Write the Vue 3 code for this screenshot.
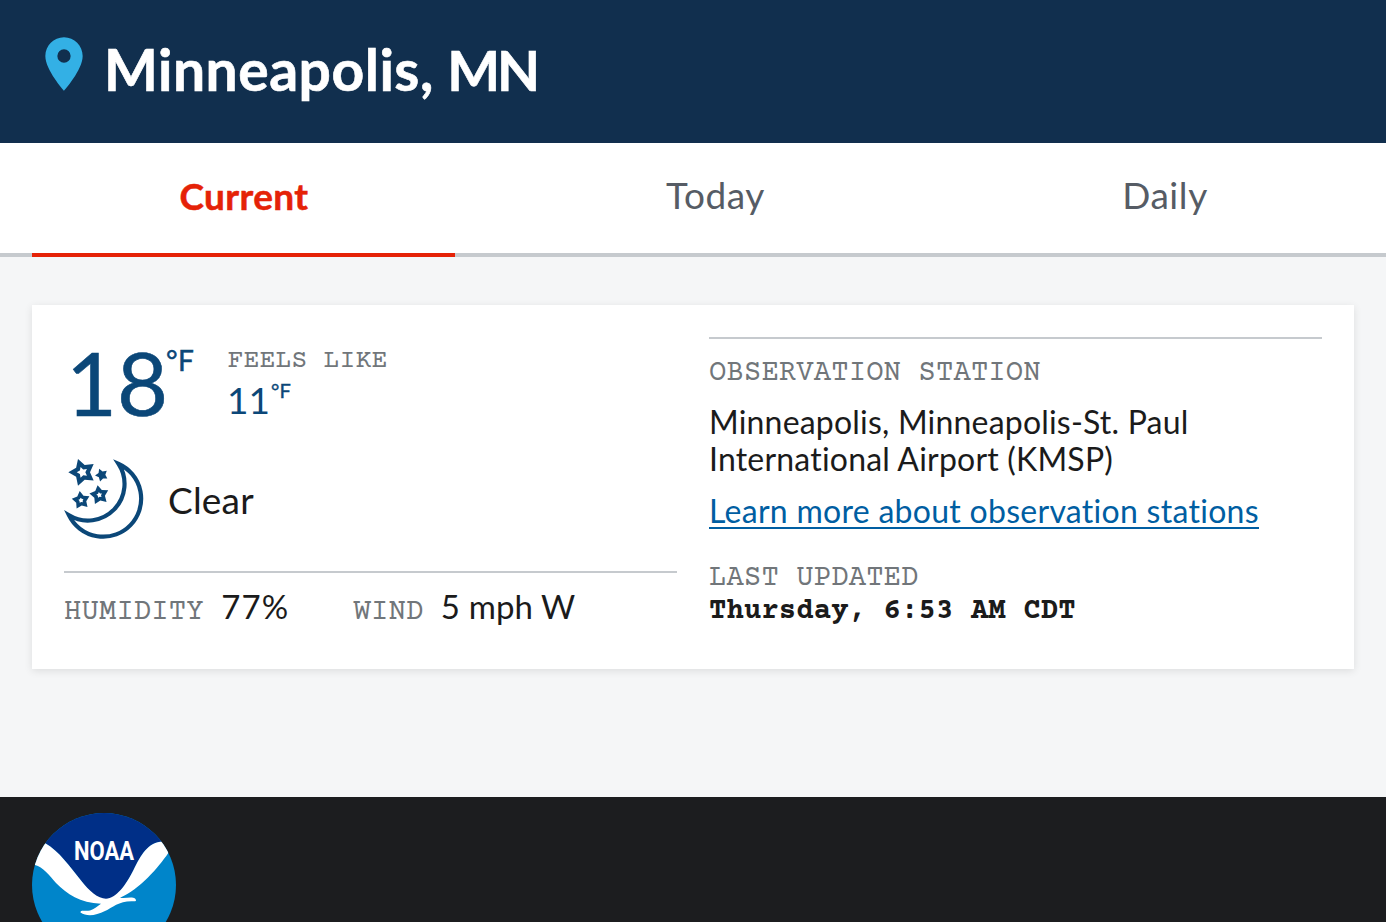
<script setup>
const tabs = [
  { label: 'Current', active: true },
  { label: 'Today', active: false },
  { label: 'Daily', active: false },
]

function starPath(cx, cy, outer, inner, rotation) {
  const points = []
  for (let i = 0; i < 10; i++) {
    const radius = i % 2 === 0 ? outer : inner
    const angle = ((rotation + i * 36) * Math.PI) / 180
    points.push(`${(cx + radius * Math.cos(angle)).toFixed(1)} ${(cy + radius * Math.sin(angle)).toFixed(1)}`)
  }
  return `M${points.join('L')}Z`
}

const stars = [
  starPath(97, 97, 42, 23, -108) + starPath(97, 97, 17, 9, -108),
  starPath(155, 105, 20, 11, -112),
  starPath(93, 181, 28, 16, -98) + starPath(93, 181, 8, 5, -98),
  starPath(148, 165, 30, 17, -100) + starPath(148, 165, 9, 5, -100),
]
</script>

<template>
  <div class="page">
    <header class="header">
      <svg class="pin" viewBox="0 0 24 24" aria-hidden="true">
        <path d="M12 2C8.13 2 5 5.13 5 9c0 5.25 7 13 7 13s7-7.75 7-13c0-3.87-3.13-7-7-7zm0 9.5a2.5 2.5 0 0 1 0-5 2.5 2.5 0 0 1 0 5z" />
      </svg>
      <h1 class="title">Minneapolis, <span class="state">MN</span></h1>
    </header>

    <nav class="tabs">
      <button v-for="tab in tabs" :key="tab.label" class="tab" :class="{ active: tab.active }">
        <span>{{ tab.label }}</span>
      </button>
    </nav>

    <main class="main">
      <section class="card">
        <div class="conditions">
          <div class="temps">
            <div class="temp">18<span class="unit">°F</span></div>
            <div class="feels">
              <div class="label feels-label">FEELS LIKE</div>
              <div class="feels-value">11<span class="unit-small">°F</span></div>
            </div>
          </div>
          <div class="sky">
            <svg class="moon" viewBox="42 48 240 252" aria-hidden="true">
              <path class="crescent" d="M206 72A114 114 0 1 1 57 226A110 110 0 0 0 206 72Z" />
              <path v-for="(d, i) in stars" :key="i" class="star" :d="d" />
            </svg>
            <span class="sky-text">Clear</span>
          </div>
          <div class="metrics">
            <div class="metric"><span class="label">HUMIDITY</span><span class="value humidity">77%</span></div>
            <div class="metric"><span class="label">WIND</span><span class="value wind">5 mph W</span></div>
          </div>
        </div>

        <div class="station">
          <div class="label station-label">OBSERVATION STATION</div>
          <p class="station-name">Minneapolis, Minneapolis-St. Paul<br />International Airport (KMSP)</p>
          <a class="link" href="#">Learn more about observation stations</a>
          <div class="label updated-label">LAST UPDATED</div>
          <div class="updated">Thursday, 6:53 AM CDT</div>
        </div>
      </section>
    </main>

    <footer class="footer">
      <svg class="logo" viewBox="0 0 144 144" role="img">
        <clipPath id="disc"><circle cx="72" cy="72" r="72" /></clipPath>
        <g clip-path="url(#disc)">
          <rect width="144" height="144" fill="#0085ca" />
          <path fill="#002f87" d="M0 0H144V24L131 28.5C116 29 109 42 101.5 57C94 72 84 86.5 74 86.5C66 86.5 57 78 49 67.5C38 54 27 38 13.3 30.3L0 17Z" />
          <path fill="#fff" d="M0 17C7 24 10 28 13.3 30.3C27 38 38 54 49 67.5C57 78 66 85.7 74 85.7C84 85.7 94 72 101.5 57C109 42 116 29 131 28.5L144 24V31C138 38 137 38 136.3 40C126 55 108 76 88 84.7C94 85.5 100 83.5 103 85.5Q105 88 103 88.3C88 87 81 94 73 98C64 102.5 55 104 48.5 99.5C48 97 53 98.3 58 97.6C62 96 66 93 69 90.7C48 90 35 81 24 70C17 62 11 54 3 52L-4 50Z" />
        </g>
        <text class="logo-text" x="42" y="46.8" textLength="60" lengthAdjust="spacingAndGlyphs">NOAA</text>
      </svg>
    </footer>
  </div>
</template>

<style>
body {
  margin: 0;
  overflow: hidden;
}
</style>

<style scoped>
.page {
  width: 1386px;
  height: 922px;
  overflow: hidden;
  display: flex;
  flex-direction: column;
  background: #f5f6f7;
  color: #1b1b1b;
  font-family: Lato, sans-serif;
}
.header {
  box-sizing: border-box;
  height: 143px;
  flex: none;
  padding: 32px;
  display: flex;
  align-items: flex-start;
  background: #112f4e;
}
.pin {
  width: 64px;
  height: 64px;
  fill: #33b0e5;
}
.title {
  margin: 0 0 0 8px;
  font-size: 57px;
  line-height: 74px;
  font-weight: 700;
  letter-spacing: 0.5px;
  color: #fff;
  -webkit-text-stroke: 0.6px #fff;
  white-space: nowrap;
}
.state {
  margin-left: -1px;
  font-size: 56px;
  letter-spacing: -3px;
}
.tabs {
  box-sizing: border-box;
  height: 114px;
  flex: none;
  padding: 0 32px;
  display: grid;
  grid-template-columns: 423px 521px 378px;
  background: #fff;
  box-shadow: inset 0 -4px #c6cace;
}
.tab {
  display: flex;
  justify-content: center;
  align-items: flex-start;
  padding: 28px 0 0;
  border: 0;
  background: none;
  color: #565c65;
  font: 400 37px/48px Lato, sans-serif;
  letter-spacing: 0.6px;
}
.tab.active {
  padding: 29px 0 0 1px;
  border-bottom: 4px solid #e52207;
  color: #e52207;
  font-weight: 700;
  letter-spacing: 0.4px;
  -webkit-text-stroke: 0.5px #e52207;
}
.main {
  height: 540px;
  flex: none;
  box-sizing: border-box;
  padding: 48px 32px 0;
}
.card {
  box-sizing: border-box;
  height: 364px;
  padding: 32px;
  display: grid;
  grid-template-columns: 613px 613px;
  gap: 32px;
  background: #fff;
  box-shadow: 0 2px 8px rgba(0, 0, 0, 0.1);
}
.label {
  font-family: "Courier Prime", "Liberation Mono", monospace;
  font-size: 29px;
  line-height: 30px;
  letter-spacing: 0.07px;
  color: #71767a;
  white-space: nowrap;
}
.temps {
  display: flex;
  height: 118px;
  color: #0b4778;
}
.temp {
  width: 164px;
  display: flex;
  font-size: 88px;
  line-height: 90px;
  padding-left: 2px;
  box-sizing: border-box;
  -webkit-text-stroke: 0.6px #0b4778;
}
.unit {
  font-size: 28px;
  line-height: 46px;
  margin-left: -2px;
  letter-spacing: 0.3px;
  -webkit-text-stroke: 0.5px #0b4778;
}
.feels-label {
  margin: 9px 0 0 -0.5px;
  font-size: 26.5px;
  letter-spacing: 0.1px;
}
.feels-value {
  display: flex;
  font-size: 37px;
  line-height: 48px;
  margin-left: -1px;
}
.unit-small {
  font-size: 20px;
  line-height: 29px;
  margin-left: 1px;
  letter-spacing: 0.2px;
  -webkit-text-stroke: 0.4px #0b4778;
}
.sky {
  height: 116px;
  display: flex;
  align-items: flex-start;
}
.moon {
  width: 80px;
  height: 84px;
  margin-top: 1px;
}
.crescent {
  fill: none;
  stroke: #0b4778;
  stroke-width: 12.5;
}
.star {
  fill: #0b4778;
  fill-rule: evenodd;
}
.sky-text {
  margin: 21px 0 0 24px;
  font-size: 37px;
  line-height: 48px;
  letter-spacing: 0.2px;
}
.metrics {
  display: flex;
  gap: 64px;
  padding-top: 10px;
  border-top: 2px solid #c6cace;
}
.metric {
  display: flex;
  align-items: baseline;
  gap: 17.5px;
  line-height: 46px;
}
.value {
  font-size: 33px;
  line-height: 46px;
  white-space: nowrap;
}
.humidity {
  letter-spacing: 1.2px;
}
.wind {
  letter-spacing: 0.1px;
}
.station {
  border-top: 2px solid #c6cace;
}
.station-label {
  margin-top: 20px;
}
.station-name {
  margin: 14px 0 0;
  font-size: 32px;
  line-height: 37px;
  letter-spacing: 0.2px;
  white-space: nowrap;
}
.link {
  display: block;
  width: max-content;
  margin-top: 18px;
  border-bottom: 2px solid #005ea2;
  color: #005ea2;
  font-size: 32px;
  line-height: 32px;
  letter-spacing: 0.28px;
  text-decoration: none;
  white-space: nowrap;
}
.updated-label {
  margin-top: 35px;
}
.updated {
  margin-top: 3px;
  font-family: "Courier Prime", "Liberation Mono", monospace;
  font-size: 29px;
  line-height: 30px;
  font-weight: 700;
  letter-spacing: 0.07px;
  white-space: nowrap;
}
.footer {
  flex: 1;
  box-sizing: border-box;
  padding: 16px 32px 0;
  background: #1c1d1f;
}
.logo {
  display: block;
  width: 144px;
  height: 144px;
}
.logo-text {
  fill: #fff;
  font: 700 26px Roboto, sans-serif;
}
</style>
